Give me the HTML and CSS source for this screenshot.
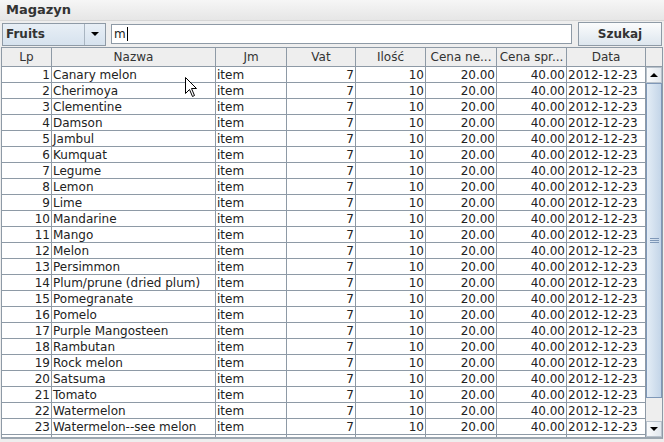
FILE: index.html
```html
<!DOCTYPE html>
<html lang="pl">
<head>
    <meta charset="UTF-8">
    <title>Magazyn</title>
    <link rel="stylesheet" href="styles.css">
</head>
<body>
    <div class="window">
        <div class="title">Magazyn</div>

        <div class="toolbar">
            <div class="combo">
                <span class="combo-label">Fruits</span>
                <span class="combo-button"><span class="arrow-down"></span></span>
            </div>
            <div class="search-field">m<span class="caret"></span></div>
            <button class="search-button">Szukaj</button>
        </div>

        <div class="pane">
            <div class="header">
                <div class="hcell">Lp</div>
                <div class="hcell">Nazwa</div>
                <div class="hcell">Jm</div>
                <div class="hcell">Vat</div>
                <div class="hcell">Ilość</div>
                <div class="hcell">Cena ne...</div>
                <div class="hcell">Cena spr...</div>
                <div class="hcell">Data</div>
                <div class="corner"></div>
            </div>

            <div class="body">
                <div class="viewport">
                    <div class="row"><span class="num">1</span><span>Canary melon</span><span>item</span><span class="num">7</span><span class="num">10</span><span class="num">20.00</span><span class="num">40.00</span><span>2012-12-23</span></div>
                    <div class="row"><span class="num">2</span><span>Cherimoya</span><span>item</span><span class="num">7</span><span class="num">10</span><span class="num">20.00</span><span class="num">40.00</span><span>2012-12-23</span></div>
                    <div class="row"><span class="num">3</span><span>Clementine</span><span>item</span><span class="num">7</span><span class="num">10</span><span class="num">20.00</span><span class="num">40.00</span><span>2012-12-23</span></div>
                    <div class="row"><span class="num">4</span><span>Damson</span><span>item</span><span class="num">7</span><span class="num">10</span><span class="num">20.00</span><span class="num">40.00</span><span>2012-12-23</span></div>
                    <div class="row"><span class="num">5</span><span>Jambul</span><span>item</span><span class="num">7</span><span class="num">10</span><span class="num">20.00</span><span class="num">40.00</span><span>2012-12-23</span></div>
                    <div class="row"><span class="num">6</span><span>Kumquat</span><span>item</span><span class="num">7</span><span class="num">10</span><span class="num">20.00</span><span class="num">40.00</span><span>2012-12-23</span></div>
                    <div class="row"><span class="num">7</span><span>Legume</span><span>item</span><span class="num">7</span><span class="num">10</span><span class="num">20.00</span><span class="num">40.00</span><span>2012-12-23</span></div>
                    <div class="row"><span class="num">8</span><span>Lemon</span><span>item</span><span class="num">7</span><span class="num">10</span><span class="num">20.00</span><span class="num">40.00</span><span>2012-12-23</span></div>
                    <div class="row"><span class="num">9</span><span>Lime</span><span>item</span><span class="num">7</span><span class="num">10</span><span class="num">20.00</span><span class="num">40.00</span><span>2012-12-23</span></div>
                    <div class="row"><span class="num">10</span><span>Mandarine</span><span>item</span><span class="num">7</span><span class="num">10</span><span class="num">20.00</span><span class="num">40.00</span><span>2012-12-23</span></div>
                    <div class="row"><span class="num">11</span><span>Mango</span><span>item</span><span class="num">7</span><span class="num">10</span><span class="num">20.00</span><span class="num">40.00</span><span>2012-12-23</span></div>
                    <div class="row"><span class="num">12</span><span>Melon</span><span>item</span><span class="num">7</span><span class="num">10</span><span class="num">20.00</span><span class="num">40.00</span><span>2012-12-23</span></div>
                    <div class="row"><span class="num">13</span><span>Persimmon</span><span>item</span><span class="num">7</span><span class="num">10</span><span class="num">20.00</span><span class="num">40.00</span><span>2012-12-23</span></div>
                    <div class="row"><span class="num">14</span><span>Plum/prune (dried plum)</span><span>item</span><span class="num">7</span><span class="num">10</span><span class="num">20.00</span><span class="num">40.00</span><span>2012-12-23</span></div>
                    <div class="row"><span class="num">15</span><span>Pomegranate</span><span>item</span><span class="num">7</span><span class="num">10</span><span class="num">20.00</span><span class="num">40.00</span><span>2012-12-23</span></div>
                    <div class="row"><span class="num">16</span><span>Pomelo</span><span>item</span><span class="num">7</span><span class="num">10</span><span class="num">20.00</span><span class="num">40.00</span><span>2012-12-23</span></div>
                    <div class="row"><span class="num">17</span><span>Purple Mangosteen</span><span>item</span><span class="num">7</span><span class="num">10</span><span class="num">20.00</span><span class="num">40.00</span><span>2012-12-23</span></div>
                    <div class="row"><span class="num">18</span><span>Rambutan</span><span>item</span><span class="num">7</span><span class="num">10</span><span class="num">20.00</span><span class="num">40.00</span><span>2012-12-23</span></div>
                    <div class="row"><span class="num">19</span><span>Rock melon</span><span>item</span><span class="num">7</span><span class="num">10</span><span class="num">20.00</span><span class="num">40.00</span><span>2012-12-23</span></div>
                    <div class="row"><span class="num">20</span><span>Satsuma</span><span>item</span><span class="num">7</span><span class="num">10</span><span class="num">20.00</span><span class="num">40.00</span><span>2012-12-23</span></div>
                    <div class="row"><span class="num">21</span><span>Tomato</span><span>item</span><span class="num">7</span><span class="num">10</span><span class="num">20.00</span><span class="num">40.00</span><span>2012-12-23</span></div>
                    <div class="row"><span class="num">22</span><span>Watermelon</span><span>item</span><span class="num">7</span><span class="num">10</span><span class="num">20.00</span><span class="num">40.00</span><span>2012-12-23</span></div>
                    <div class="row"><span class="num">23</span><span>Watermelon--see melon</span><span>item</span><span class="num">7</span><span class="num">10</span><span class="num">20.00</span><span class="num">40.00</span><span>2012-12-23</span></div>
                    <div class="row"><span class="num"></span><span></span><span></span><span></span><span></span><span></span><span></span><span></span></div>
                </div>

                <div class="vscroll">
                    <div class="sb-button"><span class="arrow-up"></span></div>
                    <div class="sb-track">
                        <div class="sb-thumb"><span class="grip"></span></div>
                    </div>
                    <div class="sb-button"><span class="arrow-down"></span></div>
                </div>
            </div>
        </div>

        <!-- mouse pointer left over the table -->
        <svg class="pointer" width="13" height="21" viewBox="0 0 13 21">
            <path d="M0.5 0.5 L0.5 16.5 L4.5 12.5 L7.5 19.5 L9.5 18.5 L6.5 11.5 L11.5 11.5 Z" fill="#fff" stroke="#000" stroke-width="1"/>
        </svg>
    </div>
</body>
</html>
```

FILE: styles.css
```css
body {
    margin: 0;
    background: #eeeeee;
    font-family: "DejaVu Sans", sans-serif;
    color: #222;
}

.window {
    position: relative;
    width: 664px;
    height: 442px;
    overflow: hidden;
    background: #eeeeee;
}

.title {
    height: 21px;
    line-height: 20px;
    padding-left: 6px;
    font-size: 13px;
    font-weight: bold;
    color: #333;
    background: linear-gradient(#f6f6f6, #e6e6e6);
    box-sizing: border-box;
    border-bottom: 1px solid #d6d6d6;
}

/* toolbar: combo + search field + button */
.toolbar {
    display: flex;
    align-items: center;
    height: 26px;
    padding-left: 2px;
}

.combo {
    display: flex;
    width: 104px;
    height: 23px;
    box-sizing: border-box;
    border: 1px solid #8e9aa6;
    background: linear-gradient(#e8eff6, #d6e2ee);
}

.combo-label {
    flex: 1;
    padding-left: 3px;
    font-size: 12px;
    font-weight: bold;
    line-height: 21px;
    color: #333;
}

.combo-button {
    display: flex;
    align-items: center;
    justify-content: center;
    width: 20px;
    border-left: 1px solid #a9b5c1;
}

.arrow-down {
    width: 0;
    height: 0;
    border-left: 4px solid transparent;
    border-right: 4px solid transparent;
    border-top: 4px solid #000;
}

.arrow-up {
    width: 0;
    height: 0;
    border-left: 4px solid transparent;
    border-right: 4px solid transparent;
    border-bottom: 4px solid #000;
}

.search-field {
    width: 461px;
    height: 20px;
    margin-left: 5px;
    box-sizing: border-box;
    border: 1px solid #8e9aa6;
    background: #fff;
    padding-left: 2px;
    font-size: 12px;
    line-height: 18px;
    color: #222;
}

.caret {
    display: inline-block;
    width: 1px;
    height: 14px;
    margin-left: 1px;
    background: #000;
    vertical-align: -3px;
}

.search-button {
    width: 84px;
    height: 24px;
    margin-left: 6px;
    padding: 0;
    border: 1px solid #8e9aa6;
    border-radius: 0;
    background: linear-gradient(#fbfcfd, #dde6ee);
    font-family: "DejaVu Sans", sans-serif;
    font-size: 12px;
    font-weight: bold;
    color: #333;
}

/* table in scroll pane */
.pane {
    width: 662px;
    margin-left: 1px;
    box-sizing: border-box;
    border: 1px solid #8e9aa6;
    border-bottom: 2px solid #9ca6b0;
    background: #fff;
}

.header,
.row {
    display: grid;
    grid-template-columns: 50px 164px 71px 69px 70px 71px 70px 79px;
}

.header {
    grid-template-columns: 50px 164px 71px 69px 70px 71px 70px 79px 16px;
    height: 19px;
    background: #eeeeee;
    border-bottom: 1px solid #8e9aa6;
    box-sizing: border-box;
}

.hcell {
    border-right: 1px solid #8e9aa6;
    font-size: 12px;
    line-height: 19px;
    text-align: center;
    white-space: nowrap;
    overflow: hidden;
    color: #333;
}

.corner {
    background: #eeeeee;
}

.body {
    display: flex;
    height: 370px;
}

.viewport {
    width: 644px;
    overflow: hidden;
}

.row {
    height: 16px;
    box-sizing: border-box;
    border-bottom: 1px solid #8e9aa6;
}

.row span {
    border-right: 1px solid #8e9aa6;
    padding: 0 1px;
    font-size: 12px;
    line-height: 16px;
    white-space: nowrap;
    overflow: hidden;
}

.row span.num {
    text-align: right;
}

/* vertical scrollbar */
.vscroll {
    display: flex;
    flex-direction: column;
    width: 16px;
    background: #eeeeee;
}

.sb-button {
    display: flex;
    align-items: center;
    justify-content: center;
    height: 16px;
    box-sizing: border-box;
    border: 1px solid #b8c2cc;
    background: linear-gradient(to right, #fafbfc, #e2e8ee);
}

.sb-track {
    flex: 1;
    padding-bottom: 23px;
    display: flex;
    flex-direction: column;
}

.sb-thumb {
    flex: 1;
    display: flex;
    align-items: center;
    justify-content: center;
    box-sizing: border-box;
    border: 1px solid #7f98b8;
    background: linear-gradient(to right, #e4edf6, #c3d5e8);
}

.grip {
    width: 9px;
    height: 5px;
    border-top: 1px solid #7f98b8;
    border-bottom: 1px solid #7f98b8;
    box-sizing: border-box;
    position: relative;
}

.grip::after {
    content: "";
    position: absolute;
    left: 0;
    right: 0;
    top: 1px;
    border-top: 1px solid #7f98b8;
}

.pointer {
    position: absolute;
    left: 185px;
    top: 77px;
}
```
